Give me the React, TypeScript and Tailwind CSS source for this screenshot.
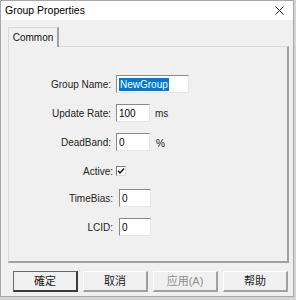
export default function App() {
  const font = { fontFamily: '"Liberation Sans", "Noto Sans CJK SC", sans-serif' };
  return (
    <div className="w-[296px] h-[300px] bg-[#d4d4d4] overflow-hidden" style={font}>
      <div className="w-[294px] h-[297px] bg-[#f0f0f0] border border-[#a8a8a8] flex flex-col">
        {/* Title bar */}
        <div className="h-[19px] bg-white flex items-center justify-between pl-[4px] pr-[9px] shrink-0">
          <span className="text-[10.5px] text-black">Group Properties</span>
          <svg width="9" height="9" viewBox="0 0 9 9">
            <path d="M0.5 0.5 L8.5 8.5 M8.5 0.5 L0.5 8.5" stroke="#222" strokeWidth="1" />
          </svg>
        </div>

        {/* Tabs */}
        <div className="pl-[7px] pr-[4px] pt-[6px] flex flex-col">
          <div className="flex">
            <div className="h-[20px] w-[51px] bg-[#f0f0f0] border-l border-t border-r-2 border-[#d9d9d9] border-r-[#a0a0a0] flex items-center justify-center text-[10px] text-[#111] relative top-[1px] z-10">
              Common
            </div>
          </div>
          <div className="h-[217px] border border-[#d9d9d9] border-r-[#a0a0a0] border-b-[#a0a0a0] border-r-2 border-b-2 flex flex-col pt-[28px] text-[10px] text-[#222]">
            <Row label="Group Name:" lw="w-[102px]" gap="ml-[5px]">
              <Field w="w-[73px]" selected>NewGroup</Field>
            </Row>
            <Row label="Update Rate:" lw="w-[102px]" gap="ml-[5px]" mt="mt-[11px]">
              <Field w="w-[34px]">100</Field>
              <span className="ml-[5px]">ms</span>
            </Row>
            <Row label="DeadBand:" lw="w-[102px]" gap="ml-[5px]" mt="mt-[11px]">
              <Field w="w-[34px]">0</Field>
              <span className="ml-[6px] mt-[3px]">%</span>
            </Row>
            <Row label="Active:" lw="w-[104px]" gap="ml-[3px]" mt="mt-[15px]" h="h-[10px]">
              <div className="w-[10px] h-[10px] border border-[#7a7a7a] border-r-[#dcdcdc] border-b-[#dcdcdc] bg-white flex items-center justify-center">
                <svg width="8" height="8" viewBox="0 0 8 8">
                  <path d="M1 3.8 L3 6 L7 1.5" stroke="#111" strokeWidth="1.5" fill="none" />
                </svg>
              </div>
            </Row>
            <Row label="TimeBias:" lw="w-[104px]" gap="ml-[6px]" mt="mt-[13px]">
              <Field w="w-[32px]">0</Field>
            </Row>
            <Row label="LCID:" lw="w-[104px]" gap="ml-[6px]" mt="mt-[11px]">
              <Field w="w-[32px]">0</Field>
            </Row>
          </div>
        </div>

        {/* Buttons */}
        <div className="flex gap-[5px] pl-[12px] mt-[8px] text-[11px]">
          <Btn primary>確定</Btn>
          <Btn>取消</Btn>
          <Btn disabled>应用(A)</Btn>
          <Btn>帮助</Btn>
        </div>
      </div>
    </div>
  );
}

function Row({
  label,
  children,
  lw,
  gap,
  mt = '',
  h = 'h-[18px]',
}: {
  label: string;
  children: React.ReactNode;
  lw: string;
  gap: string;
  mt?: string;
  h?: string;
}) {
  return (
    <div className={`flex items-center ${h} ${mt}`}>
      <span className={`${lw} text-right whitespace-nowrap`}>{label}</span>
      <div className={`flex items-center ${gap}`}>{children}</div>
    </div>
  );
}

function Field({ w, children, selected = false }: { w: string; children: React.ReactNode; selected?: boolean }) {
  return (
    <div className={`${w} h-[18px] bg-white border border-[#8a8a8a] border-r-[#e6e6e6] border-b-[#e6e6e6] flex items-center pl-[2px] text-[10px] text-black`}>
      {selected ? <span className="bg-[#0078d7] text-white leading-[13px] px-[1px]">{children}</span> : children}
    </div>
  );
}

function Btn({ children, primary = false, disabled = false }: { children: React.ReactNode; primary?: boolean; disabled?: boolean }) {
  return (
    <div
      className={`w-[65px] h-[21px] flex items-center justify-center bg-[#f0f0f0] border ${
        primary
          ? 'border-[#6a6a6a] border-r-[#3c3c3c] border-b-[#3c3c3c] border-r-2 border-b-2'
          : 'border-[#ffffff] border-r-[#a0a0a0] border-b-[#a0a0a0] border-r-2 border-b-2'
      } ${disabled ? 'text-[#8d8d8d]' : 'text-[#222]'}`}
    >
      {children}
    </div>
  );
}
